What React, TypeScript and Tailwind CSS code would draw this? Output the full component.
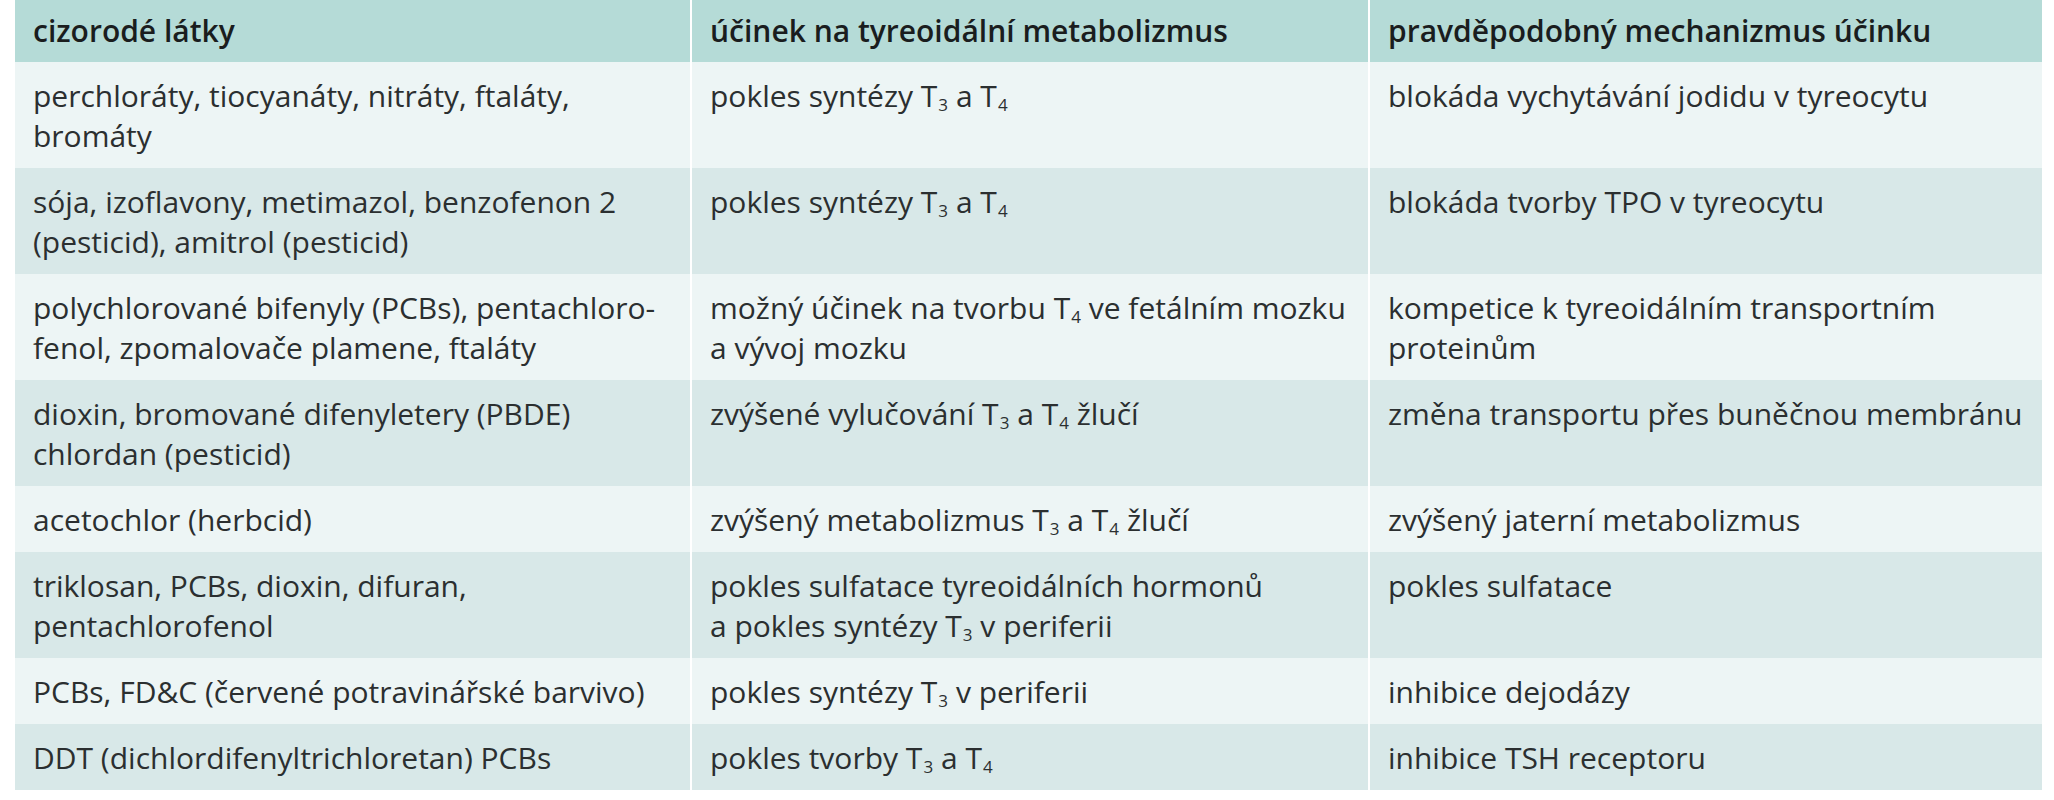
type Cell = React.ReactNode[]

const T = ({ n }: { n: string }) => (
  <>
    T<sub className="relative top-[4px] ml-[1px] align-baseline text-[17px] leading-none">{n}</sub>
  </>
)

const rows: Cell[][] = [
  [
    ["perchloráty, tiocyanáty, nitráty, ftaláty,", "bromáty"],
    [<>pokles syntézy <T n="3" /> a <T n="4" /></>],
    ["blokáda vychytávání jodidu v tyreocytu"],
  ],
  [
    ["sója, izoflavony, metimazol, benzofenon 2", "(pesticid), amitrol (pesticid)"],
    [<>pokles syntézy <T n="3" /> a <T n="4" /></>],
    ["blokáda tvorby TPO v tyreocytu"],
  ],
  [
    ["polychlorované bifenyly (PCBs), pentachloro-", "fenol, zpomalovače plamene, ftaláty"],
    [<>možný účinek na tvorbu <T n="4" /> ve fetálním mozku</>, "a vývoj mozku"],
    ["kompetice k tyreoidálním transportním", "proteinům"],
  ],
  [
    ["dioxin, bromované difenyletery (PBDE)", "chlordan (pesticid)"],
    [<>zvýšené vylučování <T n="3" /> a <T n="4" /> žlučí</>],
    ["změna transportu přes buněčnou membránu"],
  ],
  [
    ["acetochlor (herbcid)"],
    [<>zvýšený metabolizmus <T n="3" /> a <T n="4" /> žlučí</>],
    ["zvýšený jaterní metabolizmus"],
  ],
  [
    ["triklosan, PCBs, dioxin, difuran,", "pentachlorofenol"],
    ["pokles sulfatace tyreoidálních hormonů", <>a pokles syntézy <T n="3" /> v periferii</>],
    ["pokles sulfatace"],
  ],
  [
    ["PCBs, FD&C (červené potravinářské barvivo)"],
    [<>pokles syntézy <T n="3" /> v periferii</>],
    ["inhibice dejodázy"],
  ],
  [
    ["DDT (dichlordifenyltrichloretan) PCBs"],
    [<>pokles tvorby <T n="3" /> a <T n="4" /></>],
    ["inhibice TSH receptoru"],
  ],
]

const headers = [
  "cizorodé látky",
  "účinek na tyreoidální metabolizmus",
  "pravděpodobný mechanizmus účinku",
]

export default function App() {
  return (
    <div
      className="h-[800px] w-[2054px] bg-white pl-[15px] text-[30px] leading-[40px] text-[#2b2f30]"
      style={{ fontFamily: "'Open Sans', 'Liberation Sans', sans-serif" }}
    >
      <div className="grid w-[2027px] grid-cols-[675px_676px_672px] gap-x-[2px]">
        {headers.map((h) => (
          <div
            key={h}
            className="flex h-[62px] items-center bg-[#b5dbd7] px-[18px] font-semibold text-[#1a1d1e]"
          >
            {h}
          </div>
        ))}
        {rows.map((row, i) =>
          row.map((cell, j) => (
            <div
              key={`${i}-${j}`}
              className={`px-[18px] pt-[14px] pb-[12px] ${i % 2 === 0 ? "bg-[#edf5f5]" : "bg-[#d8e8e8]"}`}
            >
              {cell.map((line, k) => (
                <div key={k} className="whitespace-nowrap">
                  {line}
                </div>
              ))}
            </div>
          )),
        )}
      </div>
    </div>
  )
}
